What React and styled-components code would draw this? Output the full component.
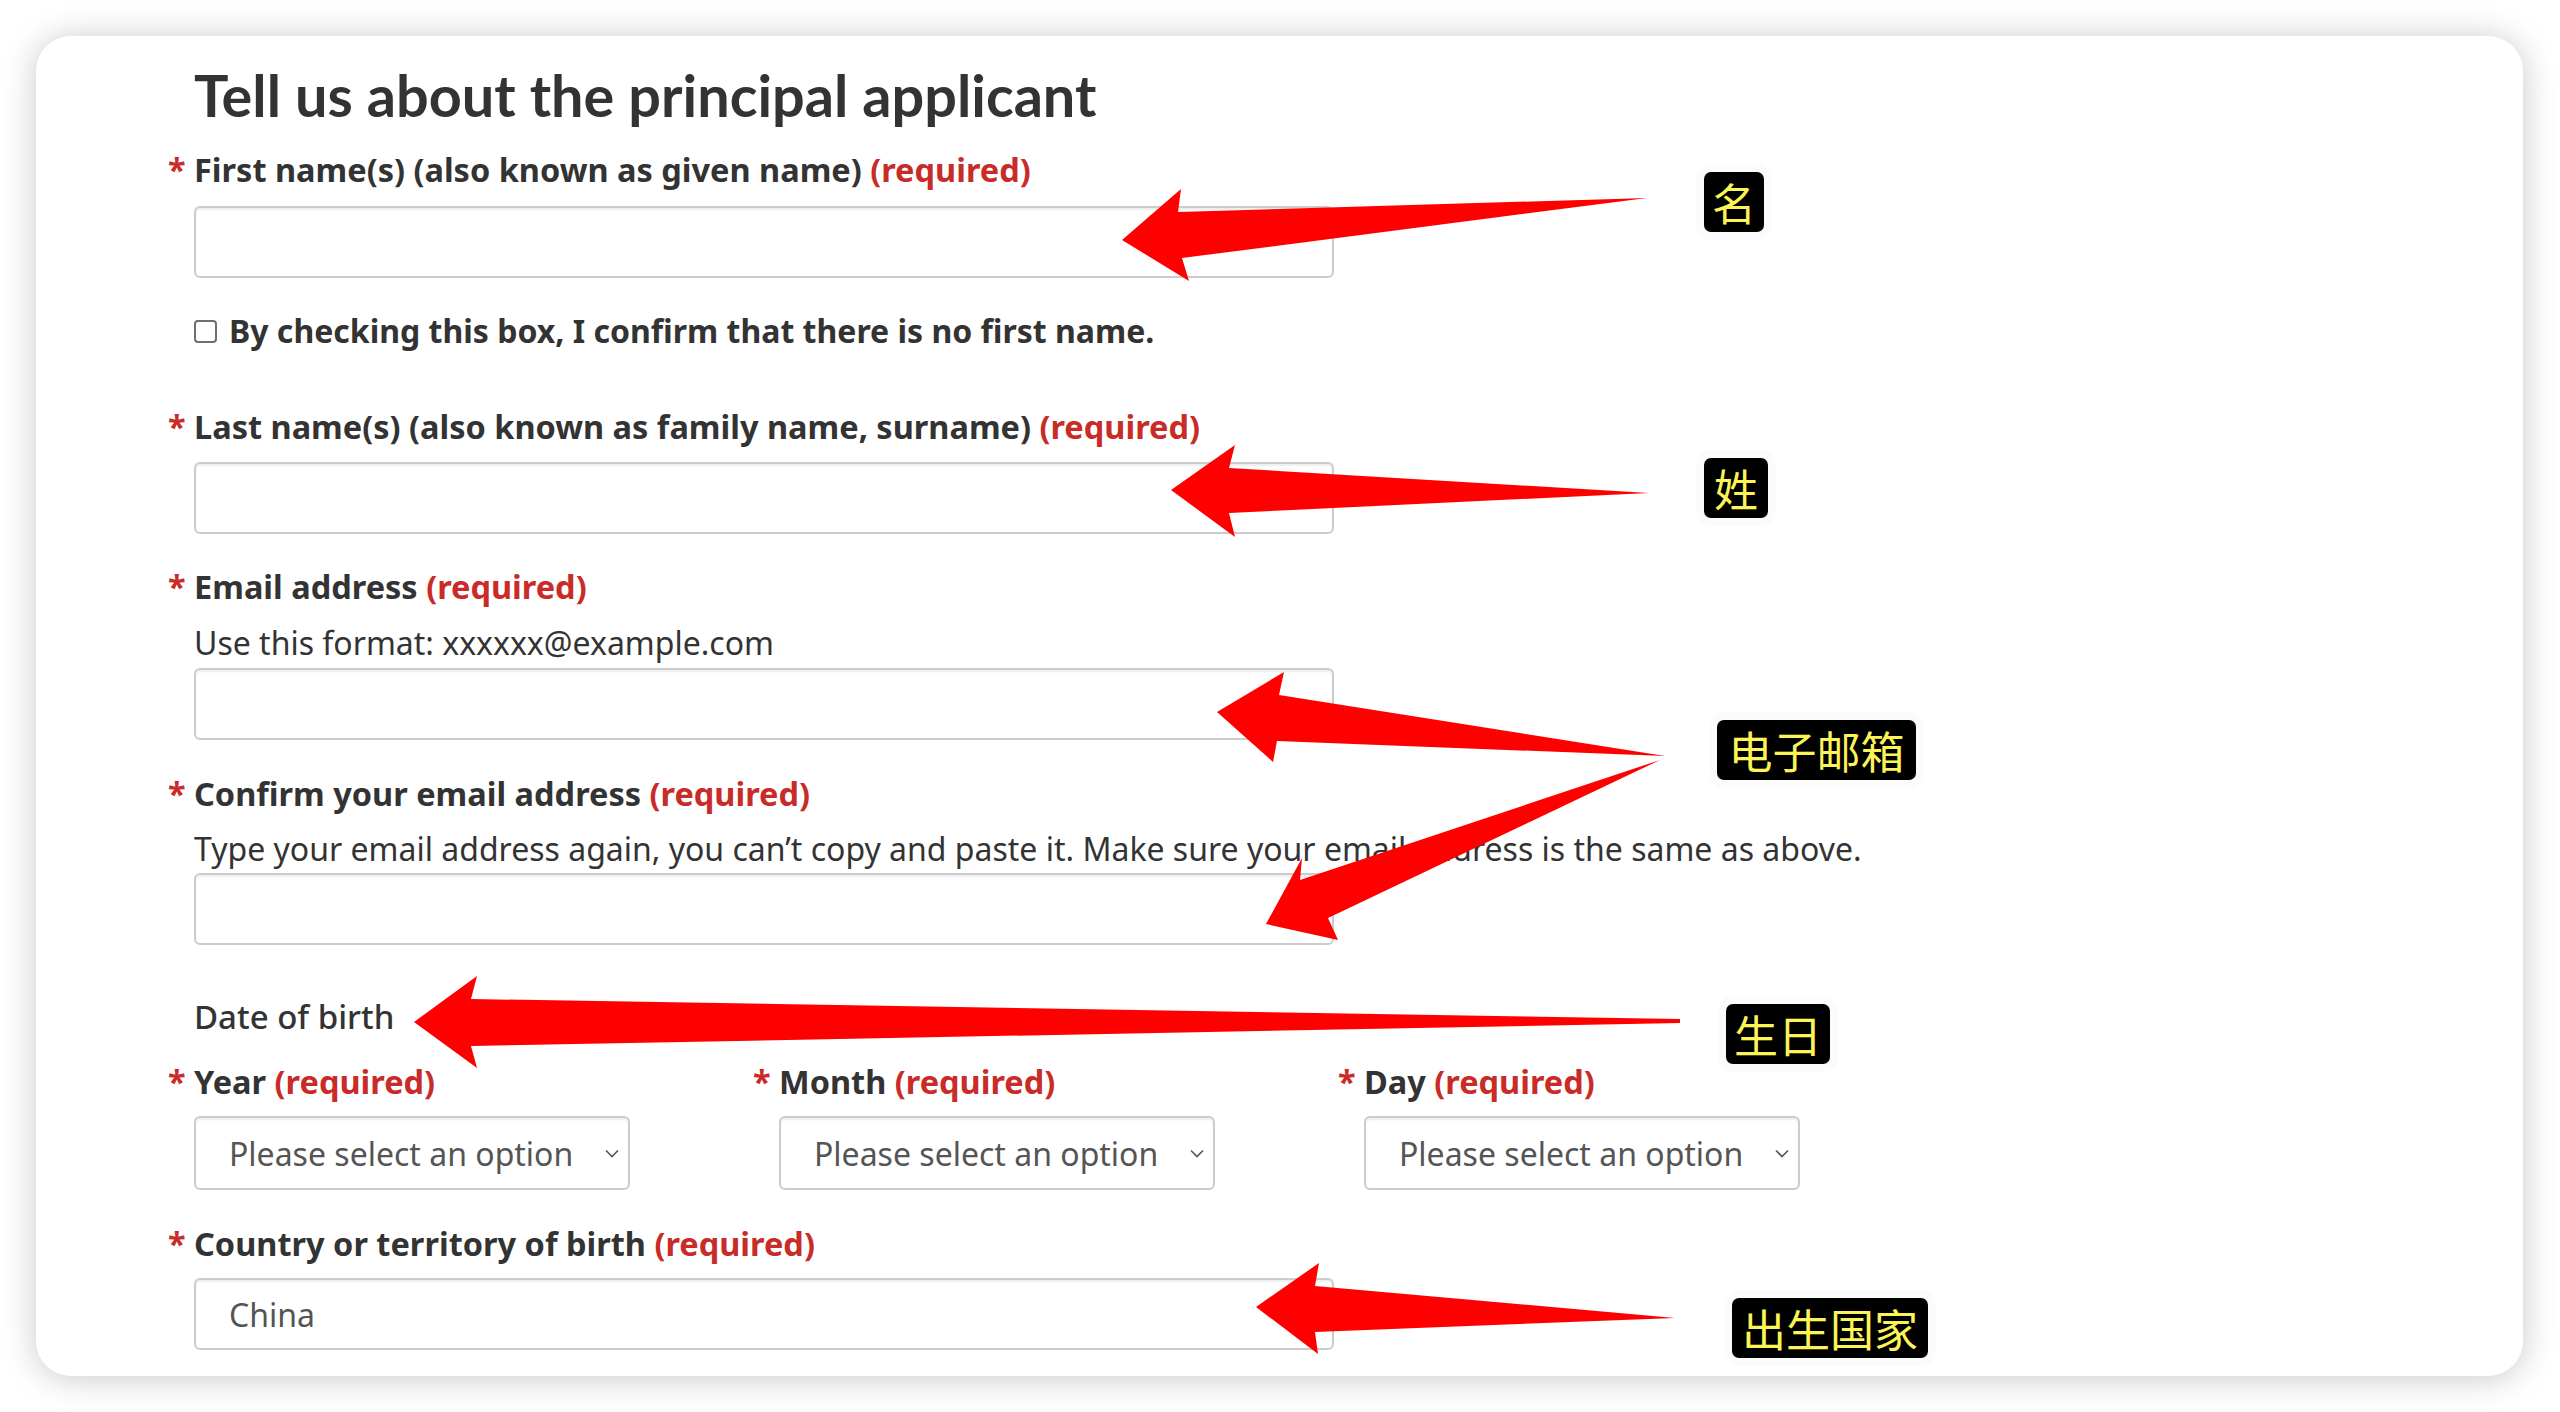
import React from 'react'
import styled, {createGlobalStyle} from 'styled-components'

const GlobalStyle = createGlobalStyle`
	body {
		margin: 0;
		background: #fff;
		font-family: "Noto Sans", "Liberation Sans", sans-serif;
	}
`

const RED = '#c92c28'

const Page = styled.div`
	position: relative;
	width: 2560px;
	height: 1412px;
	box-sizing: border-box;
	padding: 36px 37px 36px 36px;
	overflow: hidden;
`

const Card = styled.div`
	height: 100%;
	box-sizing: border-box;
	background: #fff;
	border-radius: 35px;
	box-shadow: 0 2px 34px rgba(0, 0, 0, 0.22);
	padding: 27px 0 0 158px;
	color: #333;
`

const Title = styled.h1`
	margin: 0;
	font-family: Lato, "Liberation Sans", sans-serif;
	font-weight: 700;
	font-size: 57.6px;
	line-height: 64px;
	color: #333;
`

const Label = styled.label`
	display: block;
	margin: ${(p) => p.$mt || 0}px 0 ${(p) => p.$mb || 0}px -26px;
	font-weight: 700;
	font-size: 32.5px;
	line-height: 40px;
	color: #333;
`

const Star = styled.span`
	display: inline-block;
	width: 26px;
	color: ${RED};
`

const Req = styled.span`
	color: ${RED};
`

const Hint = styled.p`
	margin: 0 0 ${(p) => p.$mb || 0}px;
	font-size: 32px;
	line-height: 40px;
	color: #333;
`

const TextInput = styled.input`
	display: block;
	width: 1140px;
	height: 72px;
	box-sizing: border-box;
	border: 2px solid #cccccc;
	border-radius: 6px;
	box-shadow: inset 0 2px 2px rgba(0, 0, 0, 0.07);
	padding: 0 33px;
	font-family: "Noto Sans", sans-serif;
	font-size: 32px;
	color: #555;
	background: #fff;
	outline: none;
`

const CheckRow = styled.div`
	display: flex;
	align-items: center;
	margin-top: 33px;
	height: 40px;
	font-weight: 700;
	font-size: 32px;
	line-height: 40px;
	color: #333;
`

const CheckBox = styled.input`
	appearance: none;
	width: 23px;
	height: 23px;
	margin: 0 12px 0 0;
	border: 2px solid #6f6f6f;
	border-radius: 4px;
	background: #fff;
	box-sizing: border-box;
`

const Legend = styled.div`
	margin-top: 52px;
	font-size: 33px;
	font-weight: 500;
	line-height: 40px;
	color: #333;
`

const DateGrid = styled.div`
	display: grid;
	grid-template-columns: repeat(3, 585px);
	margin-top: 25px;
`

const SelectWrap = styled.div`
	position: relative;
	width: 436px;
`

const Select = styled.select`
	appearance: none;
	display: block;
	width: 100%;
	height: 74px;
	box-sizing: border-box;
	border: 2px solid #cccccc;
	border-radius: 6px;
	box-shadow: inset 0 2px 2px rgba(0, 0, 0, 0.07);
	padding: 0 40px 0 33px;
	font-family: "Noto Sans", sans-serif;
	font-size: 32px;
	color: #555;
	background: #fff;
	outline: none;
`

const Chevron = styled.svg`
	position: absolute;
	right: 11px;
	top: 33px;
	width: 14px;
	height: 9px;
	pointer-events: none;
`

const Overlay = styled.div`
	position: absolute;
	inset: 0;
	pointer-events: none;
`

const Arrows = styled.svg`
	position: absolute;
	left: 0;
	top: 0;
`

const Badge = styled.div`
	position: absolute;
	left: ${(p) => p.$x}px;
	top: ${(p) => p.$y}px;
	width: ${(p) => p.$w}px;
	height: 60px;
	background: #000;
	border-radius: 7px;
	box-shadow: 0 0 0 8px #fbfbfb;
	color: #fbf456;
	font-family: "Noto Sans CJK SC", "Noto Sans", sans-serif;
	font-size: 44px;
	line-height: 60px;
	text-align: center;
	white-space: nowrap;
`

const arrows = [
	'1122,240 1181,189 1178,212 1647,198 1182,258 1189,281',
	'1171,490 1235,445 1229,468 1649,493 1229,513 1235,537',
	'1217,712 1284,672 1279,695 1665,756 1277,741 1273,762',
	'1266,924 1302,858 1300,880 1660,760 1328,918 1338,940',
	'414,1022 477,976 471,999 1680,1019 1680,1023 471,1046 477,1068',
	'1256,1307 1319,1263 1315,1286 1675,1318 1315,1332 1318,1354',
]

const badges = [
	{text: '名', x: 1704, y: 172, w: 60},
	{text: '姓', x: 1704, y: 458, w: 64},
	{text: '电子邮箱', x: 1717, y: 720, w: 199},
	{text: '生日', x: 1726, y: 1004, w: 104},
	{text: '出生国家', x: 1732, y: 1298, w: 196},
]

function Required() {
	return <Req>(required)</Req>
}

function DateSelect({label}) {
	return (
		<div>
			<Label $mb={14}>
				<Star>*</Star>
				{label} <Required />
			</Label>
			<SelectWrap>
				<Select defaultValue="">
					<option value="">Please select an option</option>
				</Select>
				<Chevron viewBox="0 0 14 9">
					<path d="M1 1.5 L7 7.5 L13 1.5" fill="none" stroke="#555" strokeWidth="1.6" />
				</Chevron>
			</SelectWrap>
		</div>
	)
}

export default function App() {
	return (
		<Page>
			<GlobalStyle />
			<Card>
				<Title>Tell us about the principal applicant</Title>

				<Label $mt={23} $mb={16}>
					<Star>*</Star>
					First name(s) (also known as given name) <Required />
				</Label>
				<TextInput type="text" />

				<CheckRow>
					<CheckBox type="checkbox" />
					By checking this box, I confirm that there is no first name.
				</CheckRow>

				<Label $mt={56} $mb={15}>
					<Star>*</Star>
					Last name(s) (also known as family name, surname) <Required />
				</Label>
				<TextInput type="text" />

				<Label $mt={33} $mb={16}>
					<Star>*</Star>
					Email address <Required />
				</Label>
				<Hint $mb={5}>Use this format: xxxxxx@example.com</Hint>
				<TextInput type="email" />

				<Label $mt={34} $mb={15}>
					<Star>*</Star>
					Confirm your email address <Required />
				</Label>
				<Hint $mb={4}>
					Type your email address again, you can’t copy and paste it. Make sure your email
					address is the same as above.
				</Hint>
				<TextInput type="email" />

				<Legend>Date of birth</Legend>
				<DateGrid>
					<DateSelect label="Year" />
					<DateSelect label="Month" />
					<DateSelect label="Day" />
				</DateGrid>

				<Label $mt={34} $mb={14}>
					<Star>*</Star>
					Country or territory of birth <Required />
				</Label>
				<TextInput type="text" defaultValue="China" readOnly />
			</Card>

			<Overlay>
				<Arrows width="2560" height="1412" viewBox="0 0 2560 1412">
					{arrows.map((pts) => (
						<polygon key={pts} points={pts} fill="#ff0000" />
					))}
				</Arrows>
				{badges.map((b) => (
					<Badge key={b.text} $x={b.x} $y={b.y} $w={b.w}>
						{b.text}
					</Badge>
				))}
			</Overlay>
		</Page>
	)
}
